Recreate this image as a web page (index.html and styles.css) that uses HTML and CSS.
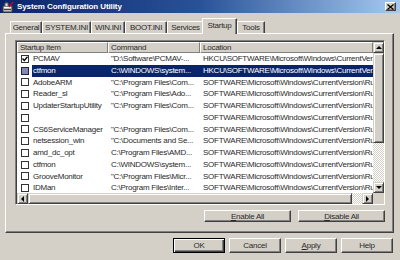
FILE: index.html
```html
<!DOCTYPE html>
<html>
<head>
<meta charset="utf-8">
<title>System Configuration Utility</title>
<link rel="stylesheet" href="styles.css">
</head>
<body>
<div class="window">
  <div class="titlebar">
    <svg class="appicon" width="12" height="12" viewBox="0 0 12 12">
      <rect x="1" y="5" width="9" height="6" fill="#c0c0c0" stroke="#404040" stroke-width="1"/>
      <rect x="2" y="6" width="7" height="1" fill="#ffffff"/>
      <rect x="2" y="8" width="7" height="1" fill="#2040a0"/>
      <path d="M3 5 L3 2 L6 2 L6 5" fill="#e0e0e0" stroke="#606060" stroke-width="1"/>
      <path d="M7 6 L11 1" stroke="#d00020" stroke-width="1.4"/>
    </svg>
    <span class="title">System Configuration Utility</span>
    <span class="close">
      <svg width="7" height="6" viewBox="0 0 7 6"><path d="M0.5 0.5 L6.5 5.5 M6.5 0.5 L0.5 5.5" stroke="#000" stroke-width="1.3"/></svg>
    </span>
  </div>
  <div class="client">
    <div class="tabs">
      <div class="tab w-general">General</div>
      <div class="tab w-system">SYSTEM.INI</div>
      <div class="tab w-win">WIN.INI</div>
      <div class="tab w-boot">BOOT.INI</div>
      <div class="tab w-services">Services</div>
      <div class="tab w-startup active">Startup</div>
      <div class="tab w-tools">Tools</div>
    </div>
    <div class="panel">
      <div class="list">
        <div class="view">
          <div class="header">
            <div class="hcell h1">Startup Item</div>
            <div class="hcell h2">Command</div>
            <div class="hcell h3">Location</div>
          </div>
          <div class="row"><span class="cbcell"><span class="cb"><svg width="6" height="6" viewBox="0 0 6 6"><path d="M0.5 2.5 L2.3 4.5 L5.5 0.8" fill="none" stroke="#000" stroke-width="1.3"/></svg></span></span><span class="name">PCMAV</span><span class="cmd">"D:\Software\PCMAV-...</span><span class="loc">HKCU\SOFTWARE\Microsoft\Windows\CurrentVer...</span></div>
          <div class="row selected"><span class="cbcell"><span class="cb sel"></span></span><span class="name">ctfmon</span><span class="cmd">C:\WINDOWS\system...</span><span class="loc">HKCU\SOFTWARE\Microsoft\Windows\CurrentVer...</span></div>
          <div class="row"><span class="cbcell"><span class="cb"></span></span><span class="name">AdobeARM</span><span class="cmd">"C:\Program Files\Com...</span><span class="loc">SOFTWARE\Microsoft\Windows\CurrentVersion\Run</span></div>
          <div class="row"><span class="cbcell"><span class="cb"></span></span><span class="name">Reader_sl</span><span class="cmd">"C:\Program Files\Ado...</span><span class="loc">SOFTWARE\Microsoft\Windows\CurrentVersion\Run</span></div>
          <div class="row"><span class="cbcell"><span class="cb"></span></span><span class="name">UpdaterStartupUtility</span><span class="cmd">"C:\Program Files\Com...</span><span class="loc">SOFTWARE\Microsoft\Windows\CurrentVersion\Run</span></div>
          <div class="row"><span class="cbcell"><span class="cb"></span></span><span class="name"></span><span class="cmd"></span><span class="loc">SOFTWARE\Microsoft\Windows\CurrentVersion\Run</span></div>
          <div class="row"><span class="cbcell"><span class="cb"></span></span><span class="name">CS6ServiceManager</span><span class="cmd">"C:\Program Files\Com...</span><span class="loc">SOFTWARE\Microsoft\Windows\CurrentVersion\Run</span></div>
          <div class="row"><span class="cbcell"><span class="cb"></span></span><span class="name">netsession_win</span><span class="cmd">"C:\Documents and Se...</span><span class="loc">SOFTWARE\Microsoft\Windows\CurrentVersion\Run</span></div>
          <div class="row"><span class="cbcell"><span class="cb"></span></span><span class="name">amd_dc_opt</span><span class="cmd">C:\Program Files\AMD...</span><span class="loc">SOFTWARE\Microsoft\Windows\CurrentVersion\Run</span></div>
          <div class="row"><span class="cbcell"><span class="cb"></span></span><span class="name">ctfmon</span><span class="cmd">C:\WINDOWS\system...</span><span class="loc">SOFTWARE\Microsoft\Windows\CurrentVersion\Run</span></div>
          <div class="row"><span class="cbcell"><span class="cb"></span></span><span class="name">GrooveMonitor</span><span class="cmd">"C:\Program Files\Micr...</span><span class="loc">SOFTWARE\Microsoft\Windows\CurrentVersion\Run</span></div>
          <div class="row"><span class="cbcell"><span class="cb"></span></span><span class="name">IDMan</span><span class="cmd">C:\Program Files\Inter...</span><span class="loc">SOFTWARE\Microsoft\Windows\CurrentVersion\Run</span></div>
        </div>
        <div class="vscroll">
          <div class="sbtn"><span class="arrow up"></span></div>
          <div class="vthumb"></div>
          <div class="track"></div>
          <div class="sbtn"><span class="arrow down"></span></div>
        </div>
        <div class="hscroll">
          <div class="sbtn"><span class="arrow left"></span></div>
          <div class="hthumb"></div>
          <div class="track"></div>
          <div class="sbtn"><span class="arrow right"></span></div>
        </div>
        <div class="corner"></div>
      </div>
      <div class="panel-buttons">
        <div class="btn wide"><u>E</u>nable All</div>
        <div class="btn wide"><u>D</u>isable All</div>
      </div>
    </div>
    <div class="dialog-buttons">
      <div class="btn dlg default">OK</div>
      <div class="btn dlg">Cancel</div>
      <div class="btn dlg"><u>A</u>pply</div>
      <div class="btn dlg">Help</div>
    </div>
  </div>
</div>
</body>
</html>
```

FILE: styles.css
```css
* {
  box-sizing: border-box;
  margin: 0;
  padding: 0;
}

html, body {
  width: 400px;
  height: 260px;
  overflow: hidden;
}

body {
  background: #d4d0c8;
  font-family: "Liberation Sans", Arial, sans-serif;
  font-size: 8px;
  letter-spacing: -0.25px;
  color: #2a2a2a;
}

.window {
  width: 400px;
  height: 260px;
  display: flex;
  flex-direction: column;
}

.titlebar {
  height: 13px;
  background: linear-gradient(to right, #0a246a 0%, #2a5298 50%, #a6caf0 100%);
  display: flex;
  align-items: center;
  padding: 0 4px 0 2px;
  gap: 3px;
}

.appicon {
  flex: none;
}

.title {
  flex: 1;
  color: #fff;
  font-weight: bold;
  font-size: 8px;
  letter-spacing: -0.1px;
  white-space: nowrap;
}

.close {
  width: 11px;
  height: 9px;
  background: #d4d0c8;
  border: 1px solid;
  border-color: #fff #404040 #404040 #fff;
  box-shadow: inset -1px -1px #808080;
  display: flex;
  align-items: center;
  justify-content: center;
}

.client {
  flex: 1;
  display: flex;
  flex-direction: column;
  padding: 5px 6px 0 5px;
}

.tabs {
  height: 15px;
  display: flex;
  align-items: flex-end;
  padding-left: 5px;
}

.tab {
  height: 12px;
  border: 1px solid;
  border-bottom: none;
  border-color: #fff #404040 transparent #fff;
  box-shadow: inset -1px 0 #808080;
  border-radius: 1px 1px 0 0;
  display: flex;
  align-items: center;
  justify-content: center;
  white-space: nowrap;
  background: #d4d0c8;
}

.tab.active {
  height: 16px;
  margin: 0 0 -1px -2px;
  position: relative;
  z-index: 1;
  padding-bottom: 2px;
}

.w-general { width: 32px; }
.w-system { width: 49px; }
.w-win { width: 34px; }
.w-boot { width: 42px; }
.w-services { width: 37px; }
.w-startup { width: 35px; }
.w-tools { width: 28px; }

.panel {
  height: 200px;
  border: 1px solid;
  border-color: #fff #404040 #404040 #fff;
  box-shadow: inset -1px -1px #808080;
  padding: 6px 8px 10px 9px;
  display: flex;
  flex-direction: column;
}

.list {
  height: 165px;
  flex: none;
  border: 1px solid;
  border-color: #808080 #fff #fff #808080;
  box-shadow: inset 1px 1px #404040;
  padding: 1px 0 0 1px;
  display: grid;
  grid-template-columns: 1fr 11px;
  grid-template-rows: 1fr 11px;
  background: #fff;
}

.view {
  overflow: hidden;
  background: #fff;
}

.header {
  height: 11px;
  display: flex;
  background: #d4d0c8;
}

.hcell {
  height: 11px;
  border: 1px solid;
  border-color: #fff #808080 #808080 #fff;
  padding-left: 2px;
  line-height: 9px;
  white-space: nowrap;
  overflow: hidden;
}

.h1 { width: 91px; }
.h2 { width: 92px; }
.h3 { flex: 1; }

.row {
  height: 11.75px;
  line-height: 11.75px;
  display: grid;
  grid-template-columns: 15px 76px 92px 1fr;
  white-space: nowrap;
}

.row > span {
  overflow: hidden;
}

.cbcell {
  display: flex;
  align-items: center;
  padding-left: 4px;
}

.cb {
  width: 8px;
  height: 8px;
  border: 1px solid #333;
  background: #fff;
  display: flex;
  align-items: center;
  justify-content: center;
}

.cb.sel {
  background: #8587ae;
  border-color: #1c2050;
}

.name {
  padding-left: 1px;
}

.cmd,
.loc {
  padding-left: 3px;
}

.row.selected .name,
.row.selected .cmd,
.row.selected .loc {
  background: #0a246a;
  color: #fff;
}

.vscroll {
  display: flex;
  flex-direction: column;
}

.hscroll {
  display: flex;
}

.sbtn {
  width: 11px;
  height: 11px;
  flex: none;
  background: #d4d0c8;
  border: 1px solid;
  border-color: #d4d0c8 #404040 #404040 #d4d0c8;
  box-shadow: inset 1px 1px #fff, inset -1px -1px #808080;
  display: flex;
  align-items: center;
  justify-content: center;
}

.arrow {
  width: 0;
  height: 0;
  border: 3px solid transparent;
}

.arrow.up { border-bottom-color: #000; border-top-width: 0; }
.arrow.down { border-top-color: #000; border-bottom-width: 0; }
.arrow.left { border-right-color: #000; border-left-width: 0; }
.arrow.right { border-left-color: #000; border-right-width: 0; }

.vthumb,
.hthumb {
  background: #d4d0c8;
  border: 1px solid;
  border-color: #d4d0c8 #404040 #404040 #d4d0c8;
  box-shadow: inset 1px 1px #fff, inset -1px -1px #808080;
  flex: none;
}

.vthumb { height: 90px; }
.hthumb { width: 324px; }

.track {
  flex: 1;
  background: repeating-conic-gradient(#ffffff 0 25%, #d4d0c8 0 50%) 0 0 / 2px 2px;
}

.corner {
  background: #d4d0c8;
}

.panel-buttons {
  margin-top: 5px;
  display: flex;
  justify-content: flex-end;
  gap: 7px;
}

.btn {
  height: 12px;
  background: #d4d0c8;
  border: 1px solid;
  border-color: #fff #404040 #404040 #fff;
  box-shadow: inset -1px -1px #808080;
  display: flex;
  align-items: center;
  justify-content: center;
  white-space: nowrap;
}

.btn.wide {
  width: 87px;
}

.dialog-buttons {
  margin-top: 5px;
  display: flex;
  justify-content: flex-end;
  gap: 4px;
  padding-right: 1px;
}

.btn.dlg {
  width: 52px;
  height: 15px;
}

.btn.default {
  border: 1px solid #000;
  box-shadow: inset 1px 1px #fff, inset -1px -1px #404040, inset -2px -2px #808080;
}
```
